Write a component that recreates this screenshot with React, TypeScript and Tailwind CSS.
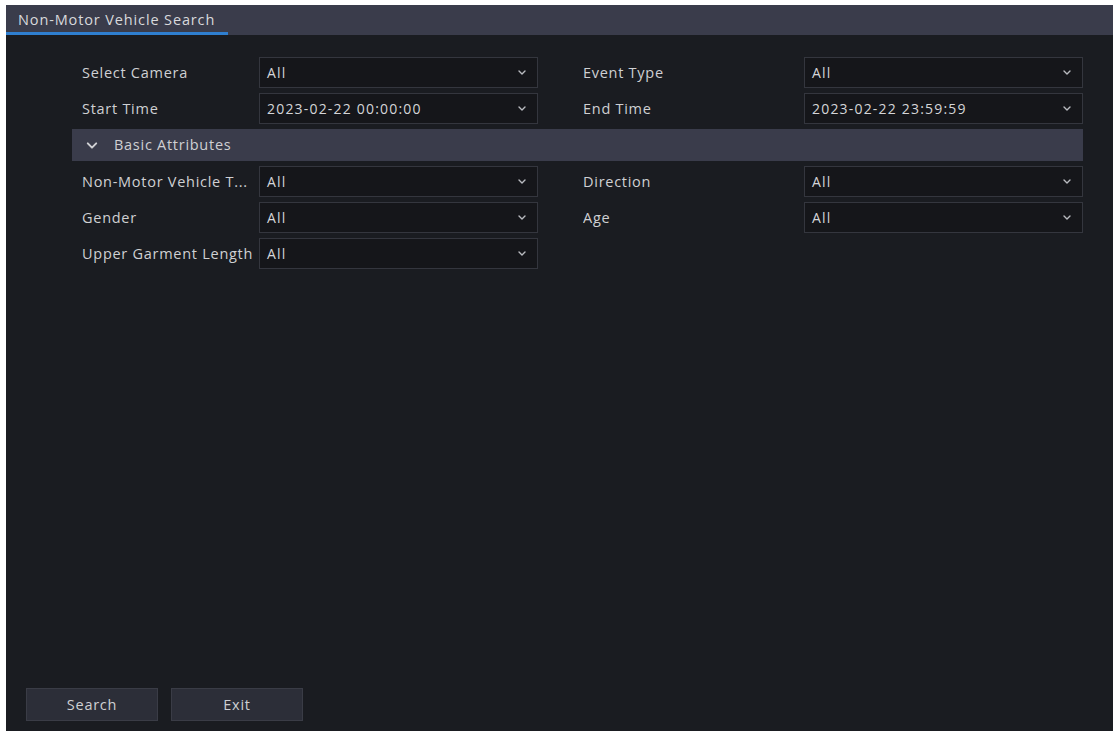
import React from "react";

const FONT = { fontFamily: '"Open Sans", "Noto Sans", sans-serif' };

function Chevron({ className = "", w = 8, h = 5 }: { className?: string; w?: number; h?: number }) {
  return (
    <svg width={w} height={h} viewBox="0 0 8 5" className={className} fill="none" stroke="currentColor" strokeWidth="1.4" strokeLinecap="round" strokeLinejoin="round">
      <path d="M1 1l3 3 3-3" />
    </svg>
  );
}

function Select({ value }: { value: string }) {
  return (
    <div className="flex h-[31px] w-[279px] items-center justify-between border border-[#34363e] bg-[#15161a] pl-[7px] pr-[11px]">
      <span className="text-[14px] tracking-[0.085em] text-[#d4d5d8]">{value}</span>
      <Chevron className="text-[#b9bbc0]" />
    </div>
  );
}

function Field({ label, value, right = false }: { label: string; value: string; right?: boolean }) {
  return (
    <div className="flex items-center">
      <div className={`${right ? "w-[221px]" : "w-[177px]"} truncate text-[14.5px] tracking-[0.05em] text-[#cfd0d3]`}>{label}</div>
      <Select value={value} />
    </div>
  );
}

export default function App() {
  return (
    <div className="h-[731px] w-[1117px] bg-white pl-[6px] pr-[4px] pt-[5px]" style={FONT}>
      <div className="flex h-full flex-col bg-[#1a1c21]">
        {/* tab bar */}
        <div className="flex h-[30px] items-end bg-[#3a3c4b]">
          <div className="flex h-full w-[222px] items-center border-b-[3px] border-[#2f7fd0] pl-[12px] pt-[2px] text-[14.5px] tracking-[0.06em] text-[#d8d9dc]">
            Non-Motor Vehicle Search
          </div>
        </div>

        <div className="flex flex-1 flex-col px-[66px] pt-[22px]">
          <div className="flex flex-col gap-[5px] pl-[10px]">
            <div className="flex gap-[45px]">
              <Field label="Select Camera" value="All" />
              <Field label="Event Type" value="All" right />
            </div>
            <div className="flex gap-[45px]">
              <Field label="Start Time" value="2023-02-22 00:00:00" />
              <Field label="End Time" value="2023-02-22 23:59:59" right />
            </div>
          </div>

          <div className="mt-[5px] flex h-[32px] w-[1011px] items-center gap-[16px] bg-[#3a3c4b] pl-[14px] text-[14.5px] tracking-[0.05em] text-[#cfd0d3]">
            <Chevron className="text-[#d0d1d4]" w={12} h={7} />
            <span>Basic Attributes</span>
          </div>

          <div className="mt-[5px] flex flex-col gap-[5px] pl-[10px]">
            <div className="flex gap-[45px]">
              <Field label="Non-Motor Vehicle T..." value="All" />
              <Field label="Direction" value="All" right />
            </div>
            <div className="flex gap-[45px]">
              <Field label="Gender" value="All" />
              <Field label="Age" value="All" right />
            </div>
            <div className="flex gap-[45px]">
              <Field label="Upper Garment Length" value="All" />
            </div>
          </div>
        </div>

        <div className="flex gap-[13px] pb-[10px] pl-[20px]">
          <button className="h-[33px] w-[132px] border border-[#3a3c46] bg-[#2c2e38] text-[14.5px] tracking-[0.05em] text-[#cfd0d3]">Search</button>
          <button className="h-[33px] w-[132px] border border-[#3a3c46] bg-[#2c2e38] text-[14.5px] tracking-[0.05em] text-[#cfd0d3]">Exit</button>
        </div>
      </div>
    </div>
  );
}
